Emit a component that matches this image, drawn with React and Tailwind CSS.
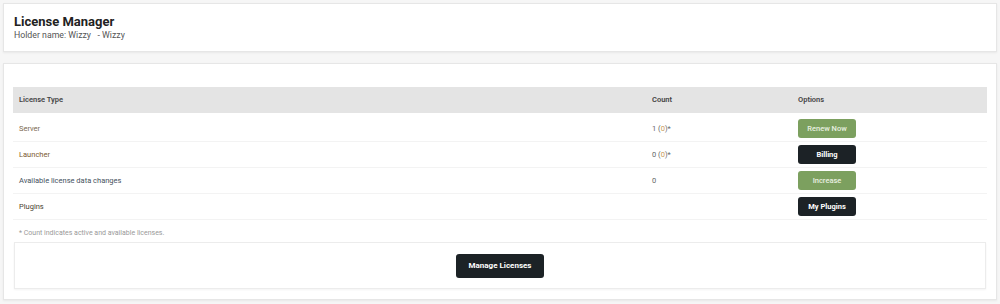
import React from 'react';

const rows = [
  { name: 'Server', color: 'text-[#7b6a4f]', count: '1', star: true, btn: 'Renew Now', kind: 'green' },
  { name: 'Launcher', color: 'text-[#7b5a2f]', count: '0', star: true, btn: 'Billing', kind: 'dark' },
  { name: 'Available license data changes', color: 'text-[#44505c]', count: '0', star: false, btn: 'Increase', kind: 'green' },
  { name: 'Plugins', color: 'text-[#4a3f30]', count: '', star: false, btn: 'My Plugins', kind: 'dark' },
];

function OptionButton({ label, kind }) {
  const cls =
    kind === 'green'
      ? 'bg-[#7ca05f] text-[#e8f0e0] font-medium'
      : 'bg-[#1c2226] text-white font-bold';
  return (
    <button className={`w-[58px] h-[19px] rounded-[3px] text-[7.5px] ${cls}`}>{label}</button>
  );
}

export default function App() {
  return (
    <div className="min-h-[304px] bg-[#f6f6f6] px-[3px] pt-[3px] pb-[4px] font-['Roboto',sans-serif]">
      <div className="bg-white border border-[#e6e6e6] shadow-[0_1px_2px_rgba(0,0,0,0.06)] h-[49px] px-[10px] pt-[9px]">
        <h1 className="text-[13px] font-bold text-[#222] leading-[17px]">License Manager</h1>
        <p className="text-[8.75px] text-[#555] leading-[11px]">
          Holder name: Wizzy&nbsp;&nbsp; - Wizzy
        </p>
      </div>

      <div className="mt-[11px] bg-white border border-[#e6e6e6] shadow-[0_1px_2px_rgba(0,0,0,0.06)] px-[9px] pt-[23px] pb-[10px]">
        <div className="grid grid-cols-[633px_146px_1fr] bg-[#e4e4e4] h-[26px] mb-[3px] items-center text-[7.5px] font-semibold text-[#444]">
          <div className="pl-[6px]">License Type</div>
          <div className="pl-[6px]">Count</div>
          <div className="pl-[6px]">Options</div>
        </div>
        {rows.map((r) => (
          <div
            key={r.name}
            className="grid grid-cols-[633px_146px_1fr] h-[26px] items-center text-[7.5px] border-b border-[#f3f3f3]"
          >
            <div className={`pl-[6px] ${r.color}`}>{r.name}</div>
            <div className="pl-[6px] text-[#666]">
              {r.count}
              {r.star && (
                <>
                  {' '}(<span className="text-[#c89a5a]">0</span>)*
                </>
              )}
            </div>
            <div className="pl-[6px]">
              <OptionButton label={r.btn} kind={r.kind} />
            </div>
          </div>
        ))}
        <p className="pl-[6px] pt-[8px] text-[7px] text-[#999] leading-[10px]">
          * Count indicates active and available licenses.
        </p>
        <div className="mt-[4px] mx-[1px] border border-[#ececec] shadow-[0_1px_2px_rgba(0,0,0,0.05)] h-[47px] flex items-center justify-center">
          <button className="w-[88px] h-[24px] rounded-[3px] bg-[#1c2226] text-white text-[8px] font-bold">
            Manage Licenses
          </button>
        </div>
      </div>
    </div>
  );
}
